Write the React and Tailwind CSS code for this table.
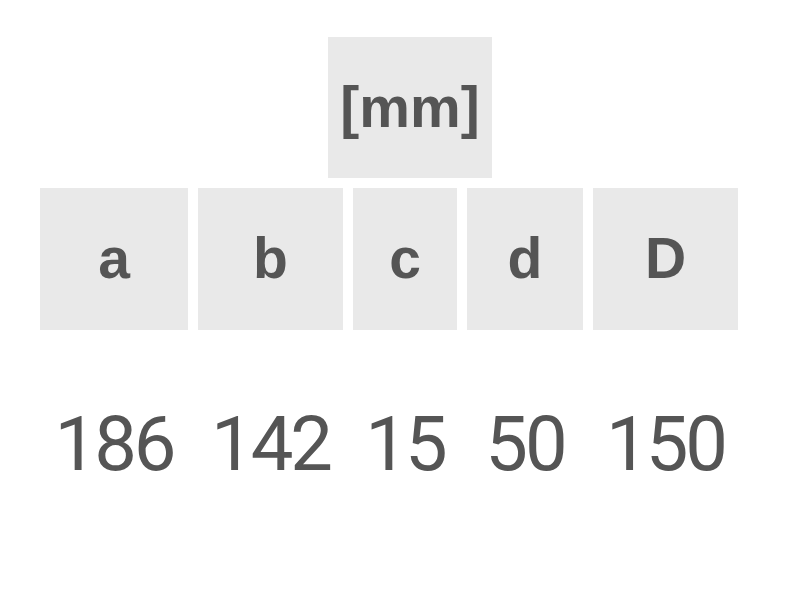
import React from 'react';

const cols = [
  { label: 'a', value: '186', w: 'w-[148px]' },
  { label: 'b', value: '142', w: 'w-[145px]' },
  { label: 'c', value: '15', w: 'w-[104px]' },
  { label: 'd', value: '50', w: 'w-[116px]' },
  { label: 'D', value: '150', w: 'w-[145px]' },
];

export default function App() {
  return (
    <div className="min-h-[607px] bg-white pt-[37px] pl-[40px] text-[#555555]">
      <div className="ml-[288px] flex h-[141px] w-[164px] items-center justify-center bg-[#e9e9e9] font-['Liberation_Sans',sans-serif] text-[57px] font-bold">
        [mm]
      </div>

      <div className="mt-[10px] flex gap-[10px]">
        {cols.map((c) => (
          <div
            key={c.label}
            className={`${c.w} flex h-[142px] items-center justify-center bg-[#e9e9e9] font-['Liberation_Sans',sans-serif] text-[57px] font-bold`}
          >
            {c.label}
          </div>
        ))}
      </div>

      <div className="mt-[76px] flex gap-[10px] font-['Roboto',sans-serif] text-[76px] leading-none tracking-[-3px]">
        {cols.map((c) => (
          <div key={c.label} className={`${c.w} text-center`}>
            {c.value}
          </div>
        ))}
      </div>
    </div>
  );
}
